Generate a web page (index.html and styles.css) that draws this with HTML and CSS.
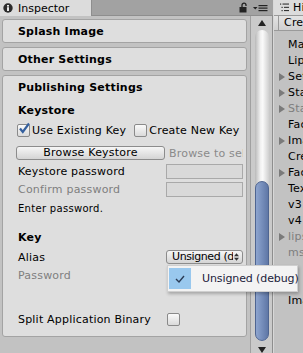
FILE: index.html
```html
<!DOCTYPE html>
<html>
<head>
<meta charset="utf-8">
<link rel="stylesheet" href="styles.css">
</head>
<body>
<div class="app">
  <div class="inspector">
    <div class="tabbar">
      <div class="tab">
        <svg class="info" width="10" height="10" viewBox="0 0 10 10"><circle cx="5" cy="5" r="4.7" fill="#2b2b2b"/><rect x="4.1" y="4.2" width="1.8" height="3.8" fill="#fff"/><rect x="4.1" y="2" width="1.8" height="1.6" fill="#fff"/></svg>
        <span>Inspector</span>
      </div>
      <div class="tabtools">
        <svg width="9" height="11" viewBox="0 0 9 11"><path d="M3 5 V3.2 A2 2 0 0 1 7 3.2 V4" fill="none" stroke="#222" stroke-width="1.3"/><rect x="0.5" y="5" width="7" height="5.5" fill="#222"/></svg>
        <svg width="15" height="8" viewBox="0 0 15 8"><path d="M0 3 H4.5 L2.25 5.5 Z" fill="#222"/><rect x="5.5" y="1" width="9" height="1.2" fill="#222"/><rect x="5.5" y="3.5" width="9" height="1.2" fill="#222"/><rect x="5.5" y="6" width="9" height="1.2" fill="#222"/></svg>
      </div>
    </div>
    <div class="ibody">
      <div class="content">
        <div class="box fold"><span class="head">Splash Image</span></div>
        <div class="box fold"><span class="head">Other Settings</span></div>
        <div class="box pub">
          <div class="row title"><span class="head">Publishing Settings</span></div>
          <div class="row sect"><span class="head">Keystore</span></div>
          <div class="row checks">
            <span class="cb checked"><svg width="14" height="14" viewBox="0 0 14 14"><path d="M3 6.5 L5.8 10 L12 1.5" fill="none" stroke="#35609e" stroke-width="2.2"/></svg></span>
            <span class="cblabel">Use Existing Key</span>
            <span class="cb second"></span>
            <span class="cblabel">Create New Key</span>
          </div>
          <div class="row browse">
            <span class="btn">Browse Keystore</span>
            <span class="hint">Browse to select keystore name</span>
          </div>
          <div class="row field-row r-kpw">
            <span class="label">Keystore password</span>
            <span class="field"></span>
          </div>
          <div class="row field-row r-conf">
            <span class="label dim">Confirm password</span>
            <span class="field"></span>
          </div>
          <div class="row r-enter"><span class="small">Enter password.</span></div>
          <div class="row r-key"><span class="head">Key</span></div>
          <div class="row field-row r-alias">
            <span class="label">Alias</span>
            <span class="popup"><span class="ptext">Unsigned (debug)</span><svg class="updown" width="5" height="8" viewBox="0 0 5 8"><path d="M0 3.2 L2.5 0.3 L5 3.2 Z M0 4.8 L2.5 7.7 L5 4.8 Z" fill="#333"/></svg></span>
          </div>
          <div class="row r-pw"><span class="label dim">Password</span></div>
          <div class="row field-row r-split">
            <span class="label">Split Application Binary</span>
            <span class="cb split"></span>
          </div>
        </div>
      </div>
      <div class="scrollbar">
        <div class="sarrow"><svg width="8" height="6" viewBox="0 0 8 6"><path d="M0 6 L4 0 L8 6 Z" fill="#222"/></svg></div>
        <div class="track"><div class="thumb"></div></div>
        <div class="sarrow down"><svg width="8" height="6" viewBox="0 0 8 6"><path d="M0 0 L4 6 L8 0 Z" fill="#222"/></svg></div>
      </div>
    </div>
  </div>
  <div class="hierarchy">
    <div class="htab">
      <svg class="hicon" width="9" height="9" viewBox="0 0 9 9"><rect x="0" y="0.5" width="1.2" height="1.2" fill="#333"/><rect x="2.5" y="0.5" width="6.5" height="1.1" fill="#333"/><rect x="1.5" y="3.8" width="1.2" height="1.2" fill="#333"/><rect x="4" y="3.8" width="5" height="1.1" fill="#333"/><rect x="1.5" y="7" width="1.2" height="1.2" fill="#333"/><rect x="4" y="7" width="5" height="1.1" fill="#333"/></svg>
      <span>Hierarchy</span>
    </div>
    <div class="htool"><span class="create">Create</span></div>
    <div class="hlist">
      <div class="hrow"><span class="arr"></span>Main Camera</div>
      <div class="hrow"><span class="arr"></span>Lipsync</div>
      <div class="hrow"><span class="arr"><i class="tri"></i></span>Settings</div>
      <div class="hrow"><span class="arr"><i class="tri"></i></span>Stage</div>
      <div class="hrow dim"><span class="arr"><i class="tri"></i></span>Stage2</div>
      <div class="hrow"><span class="arr"></span>Face</div>
      <div class="hrow"><span class="arr"><i class="tri"></i></span>Images</div>
      <div class="hrow"><span class="arr"></span>Credits</div>
      <div class="hrow"><span class="arr"><i class="tri"></i></span>Faces</div>
      <div class="hrow"><span class="arr"></span>Text</div>
      <div class="hrow"><span class="arr"></span>v3</div>
      <div class="hrow"><span class="arr"></span>v4</div>
      <div class="hrow dim"><span class="arr"><i class="tri"></i></span>lipsync</div>
      <div class="hrow dim"><span class="arr"></span>msg</div>
      <div class="hrow"></div>
      <div class="hrow"></div>
      <div class="hrow"><span class="arr"></span>Image</div>
    </div>
  </div>
</div>
<div class="menu">
  <span class="mcheck"><svg width="10" height="8" viewBox="0 0 10 8"><path d="M1 4 L4 7 L9 1" fill="none" stroke="#2a3b55" stroke-width="1.4"/></svg></span>
  <span class="mtext">Unsigned (debug)</span>
</div>
</body>
</html>
```
FILE: styles.css
```css
* { box-sizing: border-box; }
html, body { margin: 0; padding: 0; }
body {
  width: 303px;
  height: 353px;
  overflow: hidden;
  position: relative;
  background: #c2c2c2;
  font-family: "DejaVu Sans", sans-serif;
  font-size: 11px;
  letter-spacing: 0.2px;
  color: #000;
}
.app { display: flex; height: 353px; }

/* Inspector */
.inspector { width: 273px; display: flex; flex-direction: column; }
.tabbar {
  height: 16px;
  background: #a2a2a2;
  display: flex;
  justify-content: space-between;
  border-bottom: 1px solid #8e8e8e;
}
.tab {
  width: 92px;
  background: #dcdcdc;
  display: flex;
  align-items: center;
  gap: 5px;
  padding-left: 3px;
  border-right: 1px solid #8e8e8e;
  margin-bottom: -1px;
  letter-spacing: 0;
}
.tabtools { display: flex; align-items: center; gap: 5px; padding-right: 5px; }

.ibody { flex: 1; display: flex; min-height: 0; }
.content {
  width: 250px;
  padding: 3px 3px 0 2px;
  display: flex;
  flex-direction: column;
  gap: 4px;
}
.box {
  background: #dedede;
  border: 1px solid #a3a3a3;
  border-radius: 3px;
  padding-left: 15px;
}
.head { font-weight: bold; white-space: nowrap; }
.fold { height: 24px; display: flex; align-items: center; }
.pub { height: 262px; display: flex; flex-direction: column; padding-right: 3px; }

.row { display: flex; align-items: center; height: 16px; white-space: nowrap; }
.title { height: 22px; }
.sect { height: 24px; }
.checks { height: 16px; }
.browse { margin-top: 7px; }
.r-kpw { margin-top: 2px; }
.r-conf { margin-top: 2px; }
.r-enter { margin-top: 3px; }
.r-key { margin-top: 13px; }
.r-alias { margin-top: 4px; }
.r-pw { margin-top: 2px; }
.r-split { margin-top: 28px; }

.cb {
  width: 13px;
  height: 13px;
  border: 1px solid #8a8a8a;
  border-radius: 2px;
  background: linear-gradient(#fafafa, #dadada);
  position: relative;
  flex: none;
}
.cb svg { position: absolute; left: -1px; top: -3px; }
.checked { margin-left: -1px; }
.cblabel { margin-left: 2px; }
.second { margin-left: 8px; }

.btn {
  width: 149px;
  height: 14px;
  margin-left: -2px;
  border: 1px solid #8c8c8c;
  border-radius: 3px;
  background: linear-gradient(#f6f6f6, #d4d4d4);
  text-align: center;
  line-height: 12px;
  flex: none;
}
.hint { color: #8a8a8a; margin-left: 4px; overflow: hidden; }

.label { width: 148px; flex: none; }
.dim { color: #7e7e7e; }
.field {
  width: 77px;
  height: 15px;
  border: 1px solid #a9a9a9;
  background: #d9d9d9;
  flex: none;
}
.small { font-size: 10px; letter-spacing: 0.3px; }
.popup {
  width: 77px;
  height: 14px;
  border: 1px solid #8c8c8c;
  border-radius: 3px;
  background: linear-gradient(#f6f6f6, #d4d4d4);
  display: flex;
  align-items: center;
  padding-left: 5px;
  padding-right: 3px;
  overflow: hidden;
  flex: none;
}
.ptext { overflow: hidden; flex: 1; min-width: 0; line-height: 12px; letter-spacing: -0.4px; }
.updown { flex: none; margin-left: 1px; }
.split { margin-left: 1px; }

/* Scrollbar */
.scrollbar {
  width: 23px;
  display: flex;
  flex-direction: column;
  align-items: center;
  background: #cacaca;
  border-left: 1px solid #a0a0a0;
  border-right: 1px solid #8e8e8e;
}
.sarrow { height: 13px; display: flex; align-items: center; justify-content: center; flex: none; }
.track {
  width: 14px;
  height: 311px;
  margin-top: 1px;
  border-radius: 7px;
  background: linear-gradient(90deg, #b9b9b9, #f2f2f2 40%, #fafafa 55%, #cfcfcf);
  display: flex;
  flex-direction: column;
  justify-content: flex-end;
  flex: none;
}
.thumb {
  height: 160px;
  border-radius: 7px;
  border: 1px solid #4f6591;
  background: linear-gradient(90deg, #8ea5cf, #7890bd 45%, #5f77a6);
}
.down { margin-top: 2px; }

/* Hierarchy */
.hierarchy {
  flex: 1;
  min-width: 0;
  border-left: 1px solid #d8d8d8;
  overflow: hidden;
  white-space: nowrap;
}
.htab {
  height: 16px;
  background: #dcdcdc;
  display: flex;
  align-items: center;
  gap: 4px;
  padding-left: 6px;
  border-bottom: 1px solid #9a9a9a;
}
.hicon { flex: none; }
.htool {
  height: 15px;
  background: linear-gradient(#e4e4e4, #d0d0d0);
  border-bottom: 1px solid #9a9a9a;
  padding-left: 4px;
}
.create {
  display: block;
  height: 14px;
  border-left: 1px solid #9a9a9a;
  padding-left: 5px;
  line-height: 14px;
}
.hlist { padding-top: 6px; }
.hrow { height: 16px; line-height: 16px; display: flex; align-items: center; padding-left: 5px; }
.arr { width: 9px; flex: none; display: flex; align-items: center; }
.tri {
  display: block;
  width: 0;
  height: 0;
  border-top: 4px solid transparent;
  border-bottom: 4px solid transparent;
  border-left: 6px solid #7a7a7a;
}

/* Popup menu */
.menu {
  position: absolute;
  left: 167px;
  top: 265px;
  width: 131px;
  height: 27px;
  background: #f3f3f3;
  border: 1px solid #cfcfcf;
  box-shadow: 1px 2px 3px rgba(0,0,0,0.25);
  display: flex;
  align-items: center;
  padding-left: 1px;
}
.mcheck {
  width: 22px;
  height: 21px;
  background: #99c8ee;
  display: flex;
  align-items: center;
  justify-content: center;
  flex: none;
}
.mtext { margin-left: 11px; color: #1b1b3a; white-space: nowrap; letter-spacing: -0.1px; }
```
